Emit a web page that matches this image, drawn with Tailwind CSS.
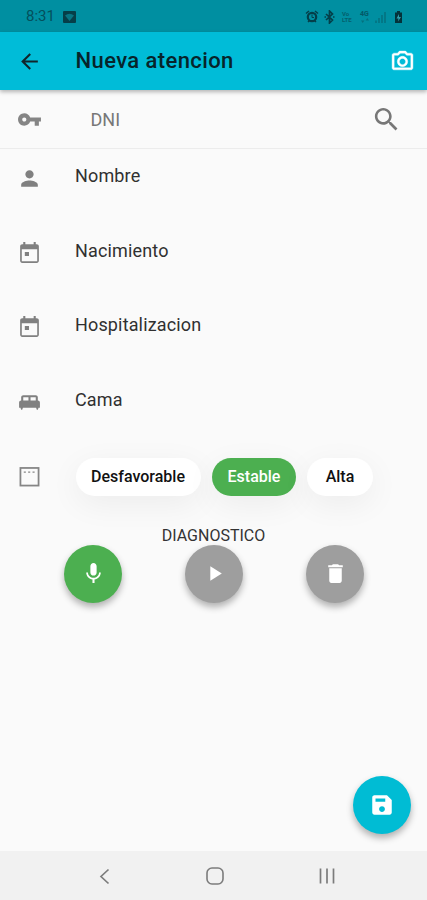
<!DOCTYPE html>
<html lang="es">
<head>
<meta charset="utf-8">
<title>Nueva atencion</title>
<script src="https://cdn.jsdelivr.net/npm/@tailwindcss/browser@4"></script>
</head>
<body class="w-[427px] h-[900px] overflow-hidden bg-[#fafafa] font-['Roboto',sans-serif] text-[#212121]">
<div class="relative flex flex-col w-[427px] h-[900px]">
  <!-- status bar -->
  <div class="h-8 shrink-0 bg-[#008fa1] flex items-center pl-[26px] pr-[24px] pt-[1px] text-[#04505c]">
    <span class="text-[15px] leading-none w-[37px]">8:31</span>
    <svg class="w-[13px] h-[12px]" viewBox="0 0 13 12"><rect width="13" height="12" rx="1" fill="#063e48"/><path d="M2 4.5Q6.5 1 11 4.5L6.500 10z" fill="#087482"/></svg>
    <div class="flex-1"></div>
    <svg class="w-[14px] h-[13px]" viewBox="0 0 14 13" fill="none" stroke="#043f49"><circle cx="7" cy="7" r="4.200" stroke-width="2.200"/><path d="M1 3.500L4 1M13 3.500L10 1M3 12l1.500-1.500M11 12l-1.500-1.500" stroke-width="1.500"/><path d="M7 4.500V7.500H9" stroke-width="1"/></svg>
    <svg class="w-[11px] h-[14px] ml-[5px]" viewBox="0 0 11 14" fill="none" stroke="#043f49" stroke-width="1.700"><path d="M2 4l6.500 6L5.500 13V1l3 3L2 10M.5 7h1.500M9 7h1.500"/></svg>
    <div class="ml-[7px] w-[10px] text-[6px] leading-[6px] font-bold text-[#045f6c]">Vo<br>LTE</div>
    <div class="ml-[8px] w-[9px] flex flex-col items-center text-[7px] leading-[7px] font-bold text-[#045866]">
      <span>4G</span>
      <svg class="w-[8px] h-[5px]" viewBox="0 0 8 5" fill="#04707e"><path d="M0 2.500h3.400L1.700 5zM4.600 2.500H8L6.300 0z"/></svg>
    </div>
    <svg class="w-[11px] h-[12px] ml-[6px]" viewBox="0 0 11 12" stroke="#04707e" stroke-width="1.500"><path d="M1 12V9.500M4 12V7M7 12V4M10 12V1"/></svg>
    <svg class="w-[9px] h-[12px] ml-[8px]" viewBox="0 0 9 12"><path d="M3 0h3v1.500h2V12H1V1.500h2z" fill="#04323a"/><path d="M5 3L2.500 7.500h2L4 10.500 7 6H5z" fill="#319eac"/></svg>
  </div>
  <!-- app bar -->
  <div class="relative z-10 h-[58px] shrink-0 bg-[#00bcd8] flex items-center pl-[17px] pr-[12px] shadow-[0_2px_4px_rgba(0,0,0,0.28)]">
    <svg class="w-[25px] h-[25px]" viewBox="0 0 24 24" fill="#10242a"><path d="M20 11H7.830l5.590-5.590L12 4l-8 8 8 8 1.410-1.410L7.830 13H20v-2z"/></svg>
    <h1 class="relative -top-px ml-[33.500px] flex-1 text-[22px] tracking-[0.400px] font-medium text-[#07242a] whitespace-nowrap"><span>Nueva atencion</span></h1>
    <svg class="w-[25px] h-[25px]" viewBox="0 0 24 24" fill="#fff" stroke="#fff" stroke-width="0.400"><path d="M20 4h-3.170L15 2H9L7.170 4H4c-1.100 0-2 .9-2 2v12c0 1.100.9 2 2 2h16c1.100 0 2-.9 2-2V6c0-1.100-.9-2-2-2zm0 14H4V6h4.050l1.830-2h4.240l1.830 2H20v12zM12 7c-2.760 0-5 2.240-5 5s2.240 5 5 5 5-2.240 5-5-2.240-5-5-5zm0 8c-1.650 0-3-1.350-3-3s1.350-3 3-3 3 1.350 3 3-1.350 3-3 3z"/></svg>
  </div>
  <!-- search row -->
  <div class="h-[59px] shrink-0 border-b border-[#ececec] flex items-center pl-[17px] pr-[25px]">
    <svg class="w-[25px] h-[25px]" viewBox="0 0 24 24" fill="#858585"><path d="M12.650 10C11.830 7.670 9.610 6 7 6c-3.310 0-6 2.690-6 6s2.690 6 6 6c2.610 0 4.830-1.670 5.650-4H17v4h4v-4h2v-4H12.650zM7 14c-1.100 0-2-.9-2-2s.9-2 2-2 2 .9 2 2-.9 2-2 2z"/></svg>
    <span class="ml-[48.500px] flex-1 text-[18px] text-[#777]">DNI</span>
    <svg class="w-[31px] h-[31px]" viewBox="0 0 24 24" fill="#777"><path d="M15.500 14h-.79l-.28-.27C15.410 12.590 16 11.110 16 9.500 16 5.910 13.090 3 9.500 3S3 5.910 3 9.500 5.910 16 9.500 16c1.610 0 3.090-.59 4.230-1.570l.27.28v.79l5 4.990L20.490 19l-4.990-5zm-6 0C7.010 14 5 11.990 5 9.500S7.010 5 9.500 5 14 7.010 14 9.500 11.990 14 9.500 14z"/></svg>
  </div>
  <!-- fields -->
  <div class="shrink-0 flex flex-col pl-[17px] pt-[17px] text-[18px] leading-[20px] tracking-[0.150px] text-[#303030]">
    <div class="h-[74.600px] flex items-start gap-[33px]">
      <svg class="w-[25px] h-[25px]" viewBox="0 0 24 24" fill="#808080"><path d="M12 12c2.210 0 4-1.790 4-4s-1.790-4-4-4-4 1.790-4 4 1.790 4 4 4zm0 2c-2.670 0-8 1.340-8 4v2h16v-2c0-2.660-5.330-4-8-4z"/></svg>
      <span>Nombre</span>
    </div>
    <div class="h-[74.600px] flex items-start gap-[33px]">
      <svg class="w-[25px] h-[25px]" viewBox="0 0 24 24" fill="#808080"><path d="M19 3h-1V1h-2v2H8V1H6v2H5c-1.110 0-1.990.9-1.990 2L3 19c0 1.100.89 2 2 2h14c1.100 0 2-.9 2-2V5c0-1.100-.9-2-2-2zm.4 16.400H4.600V8h14.800v11.400zM7.500 10.500h4v4h-4z"/></svg>
      <span>Nacimiento</span>
    </div>
    <div class="h-[74.600px] flex items-start gap-[33px]">
      <svg class="w-[25px] h-[25px]" viewBox="0 0 24 24" fill="#808080"><path d="M19 3h-1V1h-2v2H8V1H6v2H5c-1.110 0-1.990.9-1.990 2L3 19c0 1.100.89 2 2 2h14c1.100 0 2-.9 2-2V5c0-1.100-.9-2-2-2zm.4 16.400H4.600V8h14.800v11.400zM7.500 10.500h4v4h-4z"/></svg>
      <span>Hospitalizacion</span>
    </div>
    <div class="h-[68px] flex items-start gap-[33px]">
      <svg class="w-[25px] h-[25px]" viewBox="0 0 24 24" fill="#808080"><path d="M22 12c0-1.100-.9-2-2-2V7c0-1.100-.9-2-2-2H6c-1.100 0-2 .9-2 2v3c-1.100 0-2 .9-2 2v5h1.330L4 19h1l.67-2h12.670l.66 2h1l.67-2H22v-5zm-11-2H6V7h5v3zm7 0h-5V7h5v3z"/></svg>
      <span>Cama</span>
    </div>
  </div>
  <!-- condition chips -->
  <div class="h-[38px] shrink-0 flex items-center pl-[17px] text-[16px] font-medium text-[#111]">
    <svg class="w-[25px] h-[25px] mr-[34px]" viewBox="0 0 24 24" fill="none" stroke="#858585"><rect x="3.300" y="3.800" width="17.400" height="16.900" stroke-width="1.700"/><path d="M6.500 7.800h2M10.700 7.800h2M14.900 7.800h2" stroke-width="1.400"/></svg>
    <div class="w-[125px] h-[38px] rounded-full bg-white flex items-center justify-center shadow-[0_8px_32px_rgba(0,0,0,0.06)]"><span class="-ml-px">Desfavorable</span></div>
    <div class="ml-[11px] w-[84px] h-[38px] rounded-full bg-[#4caf50] text-white flex items-center justify-center shadow-[0_8px_32px_rgba(0,0,0,0.06)]"><span>Estable</span></div>
    <div class="ml-[11px] w-[66px] h-[38px] rounded-full bg-white flex items-center justify-center shadow-[0_8px_32px_rgba(0,0,0,0.06)]"><span>Alta</span></div>
  </div>
  <!-- diagnosis recorder -->
  <div class="mt-[30px] h-[19px] shrink-0 text-center text-[16px] leading-[19px] text-[#333]"><span>DIAGNOSTICO</span></div>
  <div class="shrink-0 flex justify-between pl-[64px] pr-[63px]">
    <div class="size-[58px] rounded-full bg-[#4caf50] flex items-center justify-center shadow-[0_4px_7px_rgba(0,0,0,0.3)]"><svg class="w-[25px] h-[25px]" viewBox="0 0 24 24" fill="#fff"><path d="M12 14c1.660 0 2.990-1.340 2.990-3L15 5c0-1.660-1.340-3-3-3S9 3.340 9 5v6c0 1.660 1.340 3 3 3zm5.300-3c0 3-2.540 5.100-5.300 5.100S6.700 14 6.700 11H5c0 3.410 2.720 6.230 6 6.720V21h2v-3.280c3.280-.48 6-3.300 6-6.720h-1.700z"/></svg></div>
    <div class="size-[58px] rounded-full bg-[#9e9e9e] flex items-center justify-center shadow-[0_4px_7px_rgba(0,0,0,0.3)]"><svg class="w-[25px] h-[25px]" viewBox="0 0 24 24" fill="#fff"><path d="M8 5v14l11-7z"/></svg></div>
    <div class="size-[58px] rounded-full bg-[#9e9e9e] flex items-center justify-center shadow-[0_4px_7px_rgba(0,0,0,0.3)]"><svg class="w-[25px] h-[25px]" viewBox="0 0 24 24" fill="#fff"><path d="M6 19c0 1.100.9 2 2 2h8c1.100 0 2-.9 2-2V7H6v12zM19 4h-3.500l-1-1h-5l-1 1H5v2h14V4z"/></svg></div>
  </div>
  <div class="flex-1"></div>
  <!-- system navigation -->
  <div class="h-[49px] shrink-0 bg-[#f1f1f1] flex items-center pl-[98px] pr-[91px] justify-between">
    <svg class="w-[14px] h-[18px]" viewBox="0 0 14 18" fill="none" stroke="#7c7c7c" stroke-width="1.700"><path d="M10.500 2.500L3 9.500l7.500 7"/></svg>
    <svg class="w-[18px] h-[18px]" viewBox="0 0 18 18" fill="none" stroke="#7c7c7c" stroke-width="1.600"><rect x="1" y="1" width="16" height="16" rx="5"/></svg>
    <svg class="w-[18px] h-[18px]" viewBox="0 0 18 18" stroke="#7c7c7c" stroke-width="1.700"><path d="M2.500 1.500v15M9 1.500v15M15.500 1.500v15"/></svg>
  </div>
  <!-- floating save button -->
  <div class="absolute left-[353px] top-[776px] size-[58px] rounded-full bg-[#00bcd4] flex items-center justify-center shadow-[0_4px_7px_rgba(0,0,0,0.3)]"><svg class="w-[26px] h-[26px]" viewBox="0 0 24 24" fill="#fff"><path d="M16.600 3H5c-1.100 0-2 .9-2 2v14c0 1.100.9 2 2 2h14c1.100 0 2-.9 2-2V7.400zM12 18.500c-1.500 0-2.700-1.200-2.700-2.700s1.200-2.700 2.700-2.700 2.700 1.200 2.700 2.700-1.200 2.700-2.700 2.700zM15 9H6V6h9z"/></svg></div>
</div>
</body>
</html>
